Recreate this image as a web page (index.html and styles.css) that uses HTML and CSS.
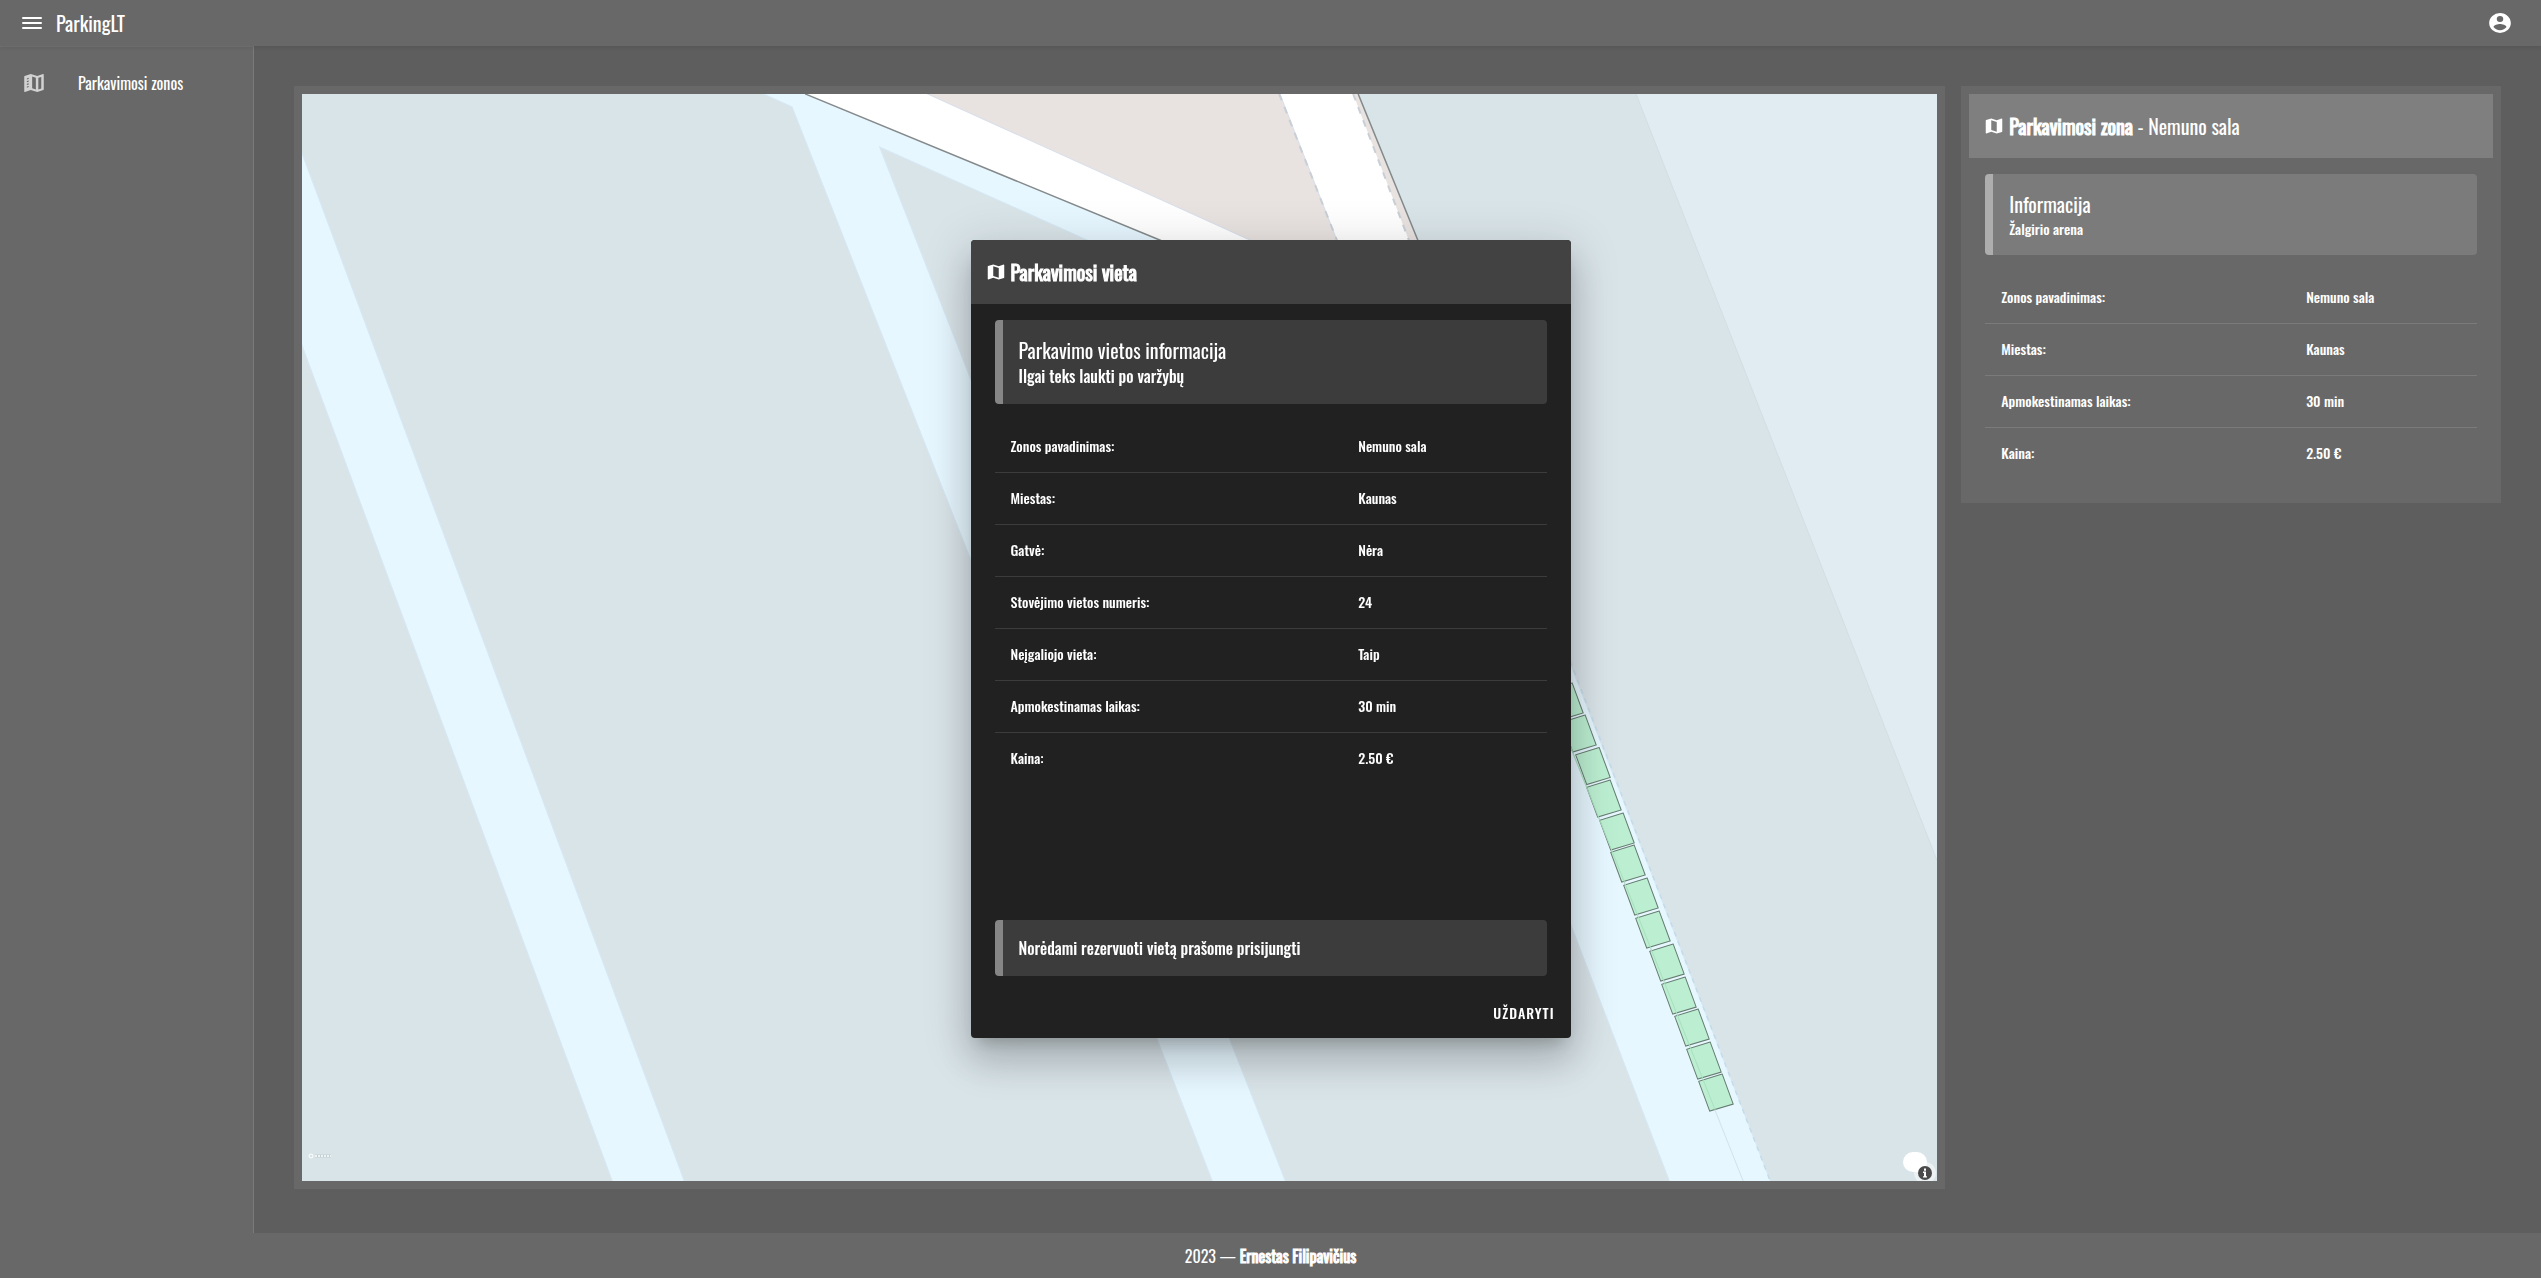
FILE: index.html
```html
<!DOCTYPE html>
<html lang="lt">
<head>
<meta charset="utf-8">
<title>ParkingLT</title>
<meta name="viewport" content="width=device-width, initial-scale=1">
<link rel="stylesheet" href="styles.css">
</head>
<body>
<svg class="sprite" aria-hidden="true">
  <symbol id="i-menu" viewBox="0 0 24 24" preserveAspectRatio="none"><path d="M3,6H21V8H3V6M3,11H21V13H3V11M3,16H21V18H3V16Z"/></symbol>
  <symbol id="i-account" viewBox="0 0 24 24" preserveAspectRatio="none"><path d="M12,19.2C9.5,19.2 7.29,17.92 6,16C6.03,14 10,12.9 12,12.9C14,12.9 17.97,14 18,16C16.71,17.92 14.5,19.2 12,19.2M12,5A3,3 0 0,1 15,8A3,3 0 0,1 12,11A3,3 0 0,1 9,8A3,3 0 0,1 12,5M12,2A10,10 0 0,0 2,12A10,10 0 0,0 12,22A10,10 0 0,0 22,12C22,6.47 17.5,2 12,2Z"/></symbol>
  <symbol id="i-map" viewBox="0 0 24 24" preserveAspectRatio="none"><path d="M15,19L9,16.89V5L15,7.11M20.5,3C20.44,3 20.39,3 20.34,3L15,5.1L9,3L3.36,4.9C3.15,4.97 3,5.15 3,5.38V20.5A0.5,0.5 0 0,0 3.5,21C3.55,21 3.61,21 3.66,20.97L9,18.9L15,21L20.64,19.1C20.85,19 21,18.85 21,18.62V3.5A0.5,0.5 0 0,0 20.5,3Z"/></symbol>
  <symbol id="i-legend" viewBox="0 0 24 24" preserveAspectRatio="none"><path fill-rule="evenodd" d="M9,3L3.36,4.9C3.15,4.97 3,5.15 3,5.38V20.5A0.5,0.5 0 0,0 3.5,21L3.66,20.97L9,18.9L15,21L20.64,19.1C20.85,19.03 21,18.85 21,18.62V3.5A0.5,0.5 0 0,0 20.5,3L20.34,3.03L15,5.1L9,3M10.300,5.600L13.700,6.870V18.400L10.300,17.130V5.470M18.700,5.900V17.600L16,18.550V6.860L18.700,5.900M7.100,6.800L5.400,7.400V8.600L7.100,8V6.800M7.100,9.500L5.400,10.100V11.300L7.100,10.700V9.500M7.100,12.200L5.400,12.800V14L7.100,13.400V12.200M7.100,14.900L5.400,15.500V16.700L7.100,16.100V14.900Z"/></symbol>
</svg>

<header class="topbar">
  <button class="icon-btn" type="button" aria-label="Meniu"><svg class="icon"><use href="#i-menu"/></svg></button>
  <h1 class="brand">ParkingLT</h1>
  <button class="icon-btn" type="button" aria-label="Paskyra"><svg class="icon"><use href="#i-account"/></svg></button>
</header>

<div class="shell">
  <nav class="sidebar">
    <a class="nav-link" href="#zonos"><svg class="icon icon-muted"><use href="#i-legend"/></svg><span>Parkavimosi zonos</span></a>
  </nav>

  <main class="content">
    <div class="col">
      <section class="panel map-panel">
        <div class="map">
          <svg class="map-canvas" viewBox="0 0 1635 1087" preserveAspectRatio="xMidYMid slice" aria-hidden="true">
            <rect width="1635" height="1087" fill="#d9e4e9"/>
            <path fill="#e0ecf2" stroke="#d3dee3" d="M1333,-2L1637,772V-2Z"/>
            <g fill="#e7f7ff" stroke="#d6e8f4">
              <path d="M-2,54L383,1089H311L-2,246Z"/>
              <path d="M457,-2L490,13L668,464L911,1089H984L577.500,53L787,147L960,225L900,-2Z"/>
              <path d="M1368,1089L1180,600L1240,497L1469,1089Z"/>
            </g>
            <path fill="#fff" d="M503,0H1053L1112,147L1150,240L1080,245L860,147Z"/>
            <path fill="#e8e3e0" stroke="#d8dfea" d="M621,-2L950,147L1060,197L1035,147L977,-2Z"/>
            <path fill="#e8e3e0" d="M1051,0H1056L1116,147L1130,182L1107,147Z"/>
            <g fill="none" stroke="#c9cfd6" stroke-width="2" stroke-dasharray="7 7">
              <path d="M977,0L1035,147"/>
              <path d="M1051,0L1107,147"/>
            </g>
            <path fill="none" stroke="#848a8b" stroke-width="1.500" d="M1056,0L1116,147M503,0L860,147"/>
            <path fill="none" stroke="#c6dbe8" stroke-width="1.500" stroke-dasharray="5 5" d="M1268,567L1468,1087"/>
            <path fill="none" stroke="#d2e2ea" d="M1268,652L1441,1087"/>
            <g class="spots">
              <path d="M1270,589l-23.500,7.300 11,29.700 23.500,-7z"/>
              <path d="M1283,621l-23.500,7.300 11,29.700 23.500,-7z"/>
              <path d="M1297,653.500l-23.500,7.300 11,29.700 23.500,-7z"/>
              <path d="M1308,686l-23.500,7.300 11,29.700 23.500,-7z"/>
              <path d="M1321,719l-23.500,7.300 11,29.700 23.500,-7z"/>
              <path d="M1332,751l-23.500,7.300 11,29.700 23.500,-7z"/>
              <path d="M1345,784l-23.500,7.300 11,29.700 23.500,-7z"/>
              <path d="M1357,817l-23.500,7.300 11,29.700 23.500,-7z"/>
              <path d="M1371,850l-23.500,7.300 11,29.700 23.500,-7z"/>
              <path d="M1383,883l-23.500,7.300 11,29.700 23.500,-7z"/>
              <path d="M1396,915l-23.500,7.300 11,29.700 23.500,-7z"/>
              <path d="M1408,948l-23.500,7.300 11,29.700 23.500,-7z"/>
              <path d="M1420,980l-23.500,7.300 11,29.700 23.500,-7z"/>
            </g>
            <path fill="none" stroke="#a9dfbe" d="M1268,652L1413,1016"/>
          </svg>
          <svg class="map-logo" viewBox="0 0 24 6" aria-hidden="true"><circle cx="3" cy="3" r="2" fill="#dbe4e8" stroke="#fff"/><path d="M7,3H23" stroke="#c3ced3" stroke-width="3"/><path d="M7,3H23" stroke="#eef3f5" stroke-width="2" stroke-dasharray="2 1"/></svg>
          <button class="map-info" type="button" aria-label="Apie žemėlapį">
            <svg viewBox="0 0 36 36"><rect x="2" y="3" width="24" height="20" rx="10" fill="#fff"/><circle cx="24" cy="24" r="11" fill="#fff" fill-opacity=".5"/><circle cx="24" cy="24" r="7" fill="#4a4a4a"/><path fill="#fff" d="M23,19.500h2v2.200h-2zM22,22.600h3v4.600h1v1.300h-4v-1.300h1v-3.300h-1z"/></svg>
          </button>
        </div>
      </section>
    </div>

    <div class="col">
      <section class="panel">
        <h2 class="card-title"><svg class="icon icon-small"><use href="#i-map"/></svg><span><b>Parkavimosi zona</b> - Nemuno sala</span></h2>
        <div class="panel-body">
          <div class="note">
            <h3>Informacija</h3>
            <p class="small">Žalgirio arena</p>
          </div>
          <table class="facts">
            <tr><th scope="row">Zonos pavadinimas:</th><td>Nemuno sala</td></tr>
            <tr><th scope="row">Miestas:</th><td>Kaunas</td></tr>
            <tr><th scope="row">Apmokestinamas laikas:</th><td>30 min</td></tr>
            <tr><th scope="row">Kaina:</th><td>2.50 €</td></tr>
          </table>
        </div>
      </section>
    </div>
  </main>
</div>

<footer class="footer">2023 — <b>Ernestas Filipavičius</b></footer>

<dialog class="modal" open aria-labelledby="modal-title">
  <h2 class="card-title" id="modal-title"><svg class="icon icon-small"><use href="#i-map"/></svg><b>Parkavimosi vieta</b></h2>
  <div class="modal-body">
    <div class="note">
      <h3>Parkavimo vietos informacija</h3>
      <p>Ilgai teks laukti po varžybų</p>
    </div>
    <div class="modal-facts">
      <table class="facts">
        <tr><th scope="row">Zonos pavadinimas:</th><td>Nemuno sala</td></tr>
        <tr><th scope="row">Miestas:</th><td>Kaunas</td></tr>
        <tr><th scope="row">Gatvė:</th><td>Nėra</td></tr>
        <tr><th scope="row">Stovėjimo vietos numeris:</th><td>24</td></tr>
        <tr><th scope="row">Neįgaliojo vieta:</th><td>Taip</td></tr>
        <tr><th scope="row">Apmokestinamas laikas:</th><td>30 min</td></tr>
        <tr><th scope="row">Kaina:</th><td>2.50 €</td></tr>
      </table>
    </div>
    <div class="note"><p>Norėdami rezervuoti vietą prašome prisijungti</p></div>
  </div>
  <form class="modal-actions" method="dialog"><button class="text-btn">Uždaryti</button></form>
</dialog>
</body>
</html>
```
FILE: styles.css
```css
:root {
  --bg: #5e5e5e;
  --surface: #686868;
  --line: #7b7b7b;
  --title-bg: #7f7f7f;
  --note-bg: #7b7b7b;
  --note-edge: #aeaeae;
}

* { box-sizing: border-box; }

body {
  margin: 0;
  min-height: 100vh;
  display: flex;
  flex-direction: column;
  background: var(--bg);
  color: #fff;
  font: 16px/24px Oswald, "Liberation Sans Narrow", "Liberation Sans", sans-serif;
}

h1, h2, h3, p { margin: 0; font-weight: 400; }
b { font-weight: 400; -webkit-text-stroke: 1px currentColor; }
button { font: inherit; color: inherit; background: none; border: 0; padding: 0; cursor: pointer; }
a { color: inherit; text-decoration: none; }

.sprite { position: absolute; width: 0; height: 0; }
.icon { width: 26px; height: 24px; fill: currentColor; display: block; flex: none; }
.icon-muted { opacity: .7; }
.icon-small { width: 22px; height: 20px; }

/* top bar */
.topbar {
  display: flex;
  align-items: center;
  height: 46px;
  padding: 0 28px 0 19px;
  background: var(--surface);
  box-shadow: 0 2px 4px rgba(0, 0, 0, .08);
  z-index: 1;
}
.brand { flex: 1; margin-left: 11px; font-size: 20px; line-height: 28px; }

/* side navigation */
.shell { flex: 1; display: flex; }
.sidebar {
  flex: none;
  width: 254px;
  padding-top: 16px;
  background: var(--surface);
  border-top: 1px solid #737373;
  border-right: 1px solid var(--line);
}
.nav-link { display: flex; align-items: center; gap: 31px; height: 40px; padding-left: 21px; }

/* page content */
.content {
  flex: 1;
  min-width: 0;
  display: grid;
  grid-template-columns: minmax(0, 3fr) minmax(0, 1fr);
  padding: 40px 32px 44px;
}
.col { display: flex; flex-direction: column; padding: 0 8px; }
.panel { background: var(--surface); padding: 8px; }
.map-panel { flex: 1; display: flex; }
.panel-body { padding: 16px; }

/* map */
.map { position: relative; flex: 1; min-height: 480px; overflow: hidden; background: #d9e4e9; }
.map-canvas { position: absolute; width: 100%; height: 100%; display: block; }
.spots { fill: #bcefd2; stroke: #667c70; stroke-width: 1; }
.map-logo { position: absolute; left: 6px; bottom: 22px; width: 24px; height: 6px; }
.map-info { position: absolute; right: 0; bottom: 0; width: 36px; height: 32px; }
.map-info svg { display: block; width: 36px; height: 36px; }

/* cards */
.card-title {
  display: flex;
  align-items: center;
  gap: 4px;
  height: 64px;
  padding: 0 14px;
  background: var(--title-bg);
  font-size: 20px;
  line-height: 32px;
}
.note {
  padding: 16px;
  background: var(--note-bg);
  border-left: 8px solid var(--note-edge);
  border-radius: 4px;
}
.note h3 { font-size: 20px; line-height: 28px; }
.note p { font-weight: 500; }
.note .small { font-size: 14px; line-height: 21px; }

.facts { width: 100%; margin-top: 16px; border-collapse: collapse; table-layout: fixed; font-size: 14px; line-height: 20px; }
.facts th, .facts td { height: 52px; padding: 0 16px; text-align: left; font-weight: 500; }
.facts th { width: 62%; }
.facts tr + tr { border-top: 1px solid var(--line); }

/* footer */
.footer { padding: 11px 16px 10px; background: var(--surface); text-align: center; }

/* dialog */
.modal {
  --line: #3c3c3c;
  --title-bg: #424242;
  --note-bg: #3c3c3c;
  --note-edge: #868686;
  position: fixed;
  inset: 0;
  margin: auto;
  z-index: 2;
  width: 600px;
  max-width: calc(100vw - 48px);
  height: fit-content;
  padding: 0;
  border: 0;
  border-radius: 4px;
  overflow: hidden;
  background: #212121;
  color: #fff;
  box-shadow: 0 11px 15px -7px rgba(0, 0, 0, .2), 0 24px 38px 3px rgba(0, 0, 0, .14), 0 9px 46px 8px rgba(0, 0, 0, .12);
}
.modal-body { padding: 16px 24px 0; }
.modal-facts { min-height: 516px; }
.modal .facts { margin-top: 0; }
.modal .facts th { width: 63%; }
.modal .note + .modal-facts { padding-top: 16px; }
.modal-actions { display: flex; justify-content: flex-end; padding: 24px 16px 12px; }
.text-btn { height: 26px; font-size: 14px; font-weight: 500; letter-spacing: 1px; text-transform: uppercase; }
```
